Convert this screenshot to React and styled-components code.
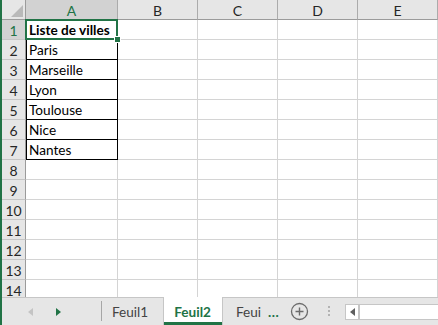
import React from "react";
import styled, { createGlobalStyle, css } from "styled-components";

const GREEN = "#217346";

const GlobalStyle = createGlobalStyle`
  html, body { margin: 0; padding: 0; background: #fff; }
  body { font-family: Lato, "Open Sans", "Liberation Sans", sans-serif; }
`;

const Window = styled.div`
  width: 438px;
  height: 325px;
  box-sizing: border-box;
  border-left: 2px solid ${GREEN};
  display: flex;
  flex-direction: column;
  overflow: hidden;
  background: #fff;
`;

const Sheet = styled.div`
  flex: 1;
  min-height: 0;
  overflow: hidden;
  display: grid;
  grid-template-columns: 24px 92px repeat(4, 80px);
  grid-auto-rows: 20px;
`;

const Corner = styled.div`
  background: #e6e6e6;
  border-right: 1px solid #9b9b9b;
  border-bottom: 1px solid #9b9b9b;
  box-sizing: border-box;
  position: relative;
  &::after {
    content: "";
    position: absolute;
    right: 2px;
    bottom: 2px;
    width: 0;
    height: 0;
    border-style: solid;
    border-width: 0 0 12px 12px;
    border-color: transparent transparent #b9b9b9 transparent;
  }
`;

const ColHeader = styled.div`
  box-sizing: border-box;
  background: ${(p) => (p.$selected ? "#d2d2d2" : "#e6e6e6")};
  color: ${(p) => (p.$selected ? GREEN : "#262626")};
  border-right: 1px solid #ababab;
  border-bottom: 1px solid #9b9b9b;
  display: flex;
  align-items: center;
  justify-content: center;
  font-size: 14px;
  padding-top: 1px;
`;

const RowHeader = styled.div`
  box-sizing: border-box;
  background: ${(p) => (p.$selected ? "#d2d2d2" : "#e6e6e6")};
  color: ${(p) => (p.$selected ? GREEN : "#262626")};
  border-right: 1px solid #9b9b9b;
  border-bottom: 1px solid #c6c6c6;
  display: flex;
  align-items: center;
  justify-content: center;
  font-size: 14px;
  padding-top: 1px;
`;

const Cell = styled.div`
  box-sizing: border-box;
  border-right: 1px solid #d4d4d4;
  border-bottom: 1px solid #d4d4d4;
  font-size: 13.6px;
  color: #000;
  display: flex;
  align-items: center;
  padding: 1px 0 0 3px;
  white-space: nowrap;
  font-weight: ${(p) => (p.$bold ? 700 : 400)};
  position: relative;
  ${(p) =>
    p.$boxed &&
    css`
      border-left: 1px solid #000;
      border-right-color: #000;
      border-bottom-color: #000;
      padding-left: 2px;
    `}
  ${(p) =>
    p.$active &&
    css`
      &::after {
        content: "";
        position: absolute;
        left: -2px;
        top: -1px;
        right: -1px;
        bottom: -1px;
        border: 2px solid ${GREEN};
        pointer-events: none;
      }
      &::before {
        content: "";
        position: absolute;
        right: -4px;
        bottom: -4px;
        width: 5px;
        height: 5px;
        background: ${GREEN};
        border: 1px solid #fff;
        z-index: 2;
      }
    `}
`;

const TabBar = styled.div`
  height: 28px;
  flex: none;
  display: flex;
  align-items: stretch;
  background: #e6e6e6;
  box-shadow: inset 0 1px 0 #c6c6c6;
`;

const NavArea = styled.div`
  width: 99px;
  display: flex;
  align-items: center;
  padding-left: 26px;
  box-sizing: border-box;
  gap: 23px;
`;

const Arrow = styled.span`
  width: 0;
  height: 0;
  border-style: solid;
  margin-top: ${(p) => (p.$flat ? 0 : 1)}px;
  ${(p) =>
    p.$dir === "left"
      ? css`
          border-width: 4px 5px 4px 0;
          border-color: transparent ${p.$color} transparent transparent;
        `
      : css`
          border-width: 4px 0 4px 5px;
          border-color: transparent transparent transparent ${p.$color};
        `}
`;

const Divider = styled.div`
  width: 1px;
  background: #a6a6a6;
  margin: 4px 0 4px 0;
`;

const Tab = styled.div`
  display: flex;
  align-items: center;
  padding: 1px ${(p) => p.$padR ?? 12}px 0 ${(p) => p.$padL ?? 12}px;
  font-size: 13.6px;
  color: #444;
  white-space: nowrap;
  ${(p) =>
    p.$active &&
    css`
      background: #fff;
      color: ${GREEN};
      font-weight: 700;
      border-left: 1px solid #c6c6c6;
      border-right: 1px solid #c6c6c6;
      box-shadow: inset 0 -3px 0 ${GREEN};
    `}
`;

const More = styled.span`
  color: ${GREEN};
  font-weight: 700;
  margin-left: 7px;
  letter-spacing: 0.5px;
`;

const AddButton = styled.div`
  display: flex;
  align-items: center;
  margin-left: 11px;
  padding-top: 1px;
`;

const Dots = styled.div`
  display: flex;
  flex-direction: column;
  justify-content: center;
  gap: 2px;
  margin-left: 19px;
  margin-right: 15px;
  span {
    width: 2px;
    height: 2px;
    background: #b3b3b3;
  }
`;

const Scroll = styled.div`
  flex: 1;
  align-self: center;
  height: 14px;
  margin-top: 2px;
  background: #fff;
  border: 1px solid #c6c6c6;
  border-right: none;
  display: flex;
`;

const ScrollBtn = styled.div`
  width: 14px;
  border-right: 2px solid #c6c6c6;
  display: flex;
  align-items: center;
  justify-content: center;
  box-sizing: border-box;
`;

const cities = ["Paris", "Marseille", "Lyon", "Toulouse", "Nice", "Nantes"];
const cols = ["A", "B", "C", "D", "E"];

export default function App() {
  const rows = [];
  for (let r = 1; r <= 14; r++) {
    rows.push(
      <RowHeader key={`h${r}`} $selected={r === 1}>
        {r}
      </RowHeader>
    );
    cols.forEach((c, i) => {
      let content = "";
      if (i === 0 && r === 1) content = "Liste de villes";
      else if (i === 0 && r >= 2 && r <= 7) content = cities[r - 2];
      rows.push(
        <Cell
          key={`${c}${r}`}
          $boxed={i === 0 && r <= 7}
          $bold={i === 0 && r === 1}
          $active={i === 0 && r === 1}
        >
          {content}
        </Cell>
      );
    });
  }
  return (
    <>
      <GlobalStyle />
      <Window>
        <Sheet>
          <Corner />
          {cols.map((c) => (
            <ColHeader key={c} $selected={c === "A"}>
              {c}
            </ColHeader>
          ))}
          {rows}
        </Sheet>
        <TabBar>
          <NavArea>
            <Arrow $dir="left" $color="#c4c4c4" />
            <Arrow $dir="right" $color={GREEN} />
          </NavArea>
          <Divider />
          <Tab $padL={10} $padR={15}>Feuil1</Tab>
          <Tab $active $padL={10} $padR={11}>Feuil2</Tab>
          <Tab $padL={13} $padR={0}>
            Feui<More>...</More>
          </Tab>
          <AddButton>
            <svg width="19" height="19" viewBox="0 0 19 19">
              <circle cx="9.5" cy="9.5" r="8" fill="none" stroke="#6b6b6b" strokeWidth="1.3" />
              <path d="M9.5 5.5v8M5.5 9.5h8" stroke="#6b6b6b" strokeWidth="1.4" />
            </svg>
          </AddButton>
          <Dots>
            <span />
            <span />
            <span />
          </Dots>
          <Scroll>
            <ScrollBtn>
              <Arrow $dir="left" $color="#5f5f5f" $flat />
            </ScrollBtn>
          </Scroll>
        </TabBar>
      </Window>
    </>
  );
}
